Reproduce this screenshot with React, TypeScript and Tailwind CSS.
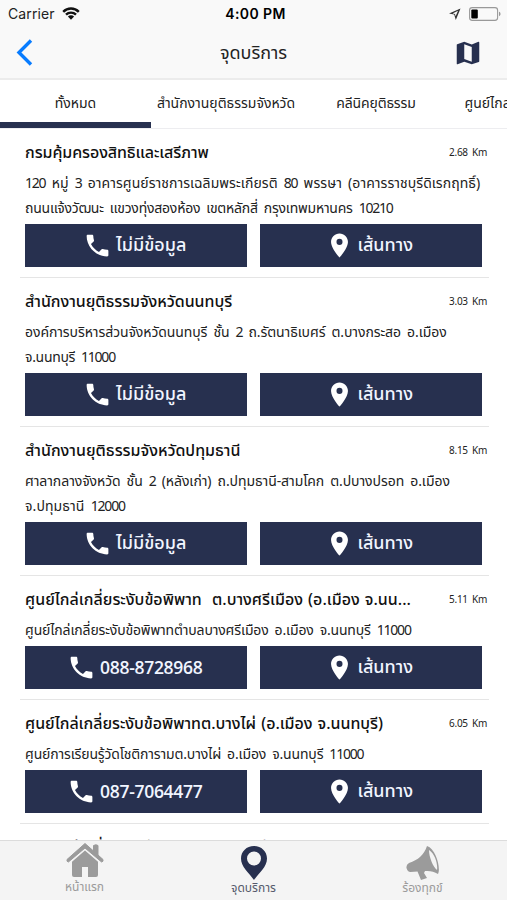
import { useState } from 'react';
import { MdMap, MdPhone, MdPlace } from 'react-icons/md';

const tabs = [
    { label: 'ทั้งหมด', className: 'w-[151px]' },
    { label: 'สำนักงานยุติธรรมจังหวัด', className: 'w-[150px]' },
    { label: 'คลีนิคยุติธรรม', className: 'w-[150px] tracking-[-0.15px]' },
    { label: 'ศูนย์ไกล่เกลี่ย', className: 'w-[102px]' },
];

const places = [
    {
        name: 'กรมคุ้มครองสิทธิและเสรีภาพ',
        nameClass: 'tracking-[-0.08px]',
        lines: [
            { text: '120 หมู่ 3 อาคารศูนย์ราชการเฉลิมพระเกียรติ 80 พรรษา (อาคารราชบุรีดิเรกฤทธิ์)', className: 'tracking-[0.05px]' },
            { text: 'ถนนแจ้งวัฒนะ แขวงทุ่งสองห้อง เขตหลักสี่ กรุงเทพมหานคร 10210', className: 'tracking-[-0.22px]' },
        ],
        distance: '2.68 Km',
        phone: '',
    },
    {
        name: 'สำนักงานยุติธรรมจังหวัดนนทบุรี',
        nameClass: 'tracking-[-0.04px]',
        lines: [
            { text: 'องค์การบริหารส่วนจังหวัดนนทบุรี ชั้น 2 ถ.รัตนาธิเบศร์ ต.บางกระสอ อ.เมือง', className: 'tracking-[-0.08px]' },
            { text: 'จ.นนทบุรี 11000', className: 'tracking-[-0.3px]' },
        ],
        distance: '3.03 Km',
        phone: '',
    },
    {
        name: 'สำนักงานยุติธรรมจังหวัดปทุมธานี',
        nameClass: '',
        lines: [
            { text: 'ศาลากลางจังหวัด ชั้น 2 (หลังเก่า) ถ.ปทุมธานี-สามโคก ต.ปบางปรอท อ.เมือง', className: 'tracking-[-0.07px]' },
            { text: 'จ.ปทุมธานี 12000', className: 'tracking-[0.1px]' },
        ],
        distance: '8.15 Km',
        phone: '',
    },
    {
        name: 'ศูนย์ไกล่เกลี่ยระงับข้อพิพาท \u00a0ต.บางศรีเมือง (อ.เมือง จ.นน...',
        nameClass: '',
        lines: [{ text: 'ศูนย์ไกล่เกลี่ยระงับข้อพิพาทตำบลบางศรีเมือง อ.เมือง จ.นนทบุรี 11000', className: 'tracking-[-0.16px]' }],
        distance: '5.11 Km',
        phone: '088-8728968',
    },
    {
        name: 'ศูนย์ไกล่เกลี่ยระงับข้อพิพาทต.บางไผ่ (อ.เมือง จ.นนทบุรี)',
        nameClass: 'tracking-[-0.04px]',
        lines: [{ text: 'ศูนย์การเรียนรู้วัดโชติการามต.บางไผ่ อ.เมือง จ.นนทบุรี 11000', className: 'tracking-[-0.15px]' }],
        distance: '6.05 Km',
        phone: '087-7064477',
    },
];

// numbers are set tighter than the Thai text around them
function Address({ text, className }: { text: string; className: string }) {
    return (
        <p className={className}>
            {text.split(/(\d+)/).map((part, i) => (i % 2 ? <span key={i} className="tracking-[-1.2px]">{part}</span> : part))}
        </p>
    );
}

export default function App() {
    const [activeTab, setActiveTab] = useState(0);

    return (
        <div className="flex h-[900px] w-[507px] flex-col overflow-hidden bg-white font-['Noto_Sans_Thai','Noto_Sans',sans-serif] text-[#222]">
            {/* Status bar */}
            <div className="grid h-[27px] shrink-0 grid-cols-3 items-center bg-[#f9f9f9] pl-2 pr-1.5 font-['Inter',sans-serif] text-[14px] text-[#222]">
                <div className="flex items-center gap-[7px]">
                    <span className="tracking-[0.1px]">Carrier</span>
                    <svg width="18" height="13" viewBox="0 0 18 13" fill="none" stroke="#111" strokeWidth="2.4">
                        <path d="M1.2 4.8a11 11 0 0 1 15.6 0M4 7.7a7 7 0 0 1 10 0" />
                        <path d="M9 12.7 5.9 9.6a4.4 4.4 0 0 1 6.2 0z" fill="#111" stroke="none" />
                    </svg>
                </div>
                <span className="pl-0.5 text-center font-semibold tracking-[0.4px] text-black">4:00 PM</span>
                <div className="flex items-center justify-end gap-2">
                    <svg width="12" height="12" viewBox="0 0 12 12">
                        <path fillRule="evenodd" fill="#333" d="M11.500.5 0 5.600l5.200 1L6.800 12zM9 2.800 6.600 8.200 6 5.900 3.600 5.400z" />
                    </svg>
                    <svg width="32" height="14" viewBox="0 0 32 14">
                        <rect x=".6" y=".6" width="28" height="12.8" rx="2.6" fill="none" stroke="#999" strokeWidth="1.1" />
                        <rect x="2.3" y="2.5" width="6.5" height="9" rx="1" fill="#000" />
                        <path d="M30 4.8c2 .6 2 3.8 0 4.4z" fill="#999" />
                    </svg>
                </div>
            </div>

            {/* Header */}
            <div className="grid h-[53px] shrink-0 grid-cols-3 items-center border-b-2 border-[#ececec] bg-[#f9f9f9] pl-4 pr-6">
                <svg width="17" height="27" viewBox="0 0 17 27" fill="none" stroke="#087cff" strokeWidth="3.4">
                    <path d="M15 1.5 3 13.5l12 12" />
                </svg>
                <h1 className="pl-2 pt-0.5 text-center text-[18px]">จุดบริการ</h1>
                <MdMap size={30} className="justify-self-end text-[#27304f]" />
            </div>

            {/* Tabs */}
            <div className="flex h-[49px] shrink-0 overflow-hidden border-b border-[#ededf0]">
                {tabs.map((tab, i) => (
                    <button
                        key={tab.label}
                        onClick={() => setActiveTab(i)}
                        className={`shrink-0 whitespace-nowrap border-b-6 pt-[5px] text-[14px] ${tab.className} ${activeTab === i ? 'border-[#27304f]' : 'border-transparent'}`}
                    >
                        {tab.label}
                    </button>
                ))}
            </div>

            {/* Service points */}
            <div className="min-h-0 flex-1 overflow-hidden pl-5 pr-[18px]">
                {places.map((place) => (
                    <div key={place.name} className="border-b border-[#e5e5e5] pb-[10px] pl-[5px] pt-[10px]">
                        <div className="flex h-7 items-center justify-between whitespace-nowrap">
                            <h2 className={`text-[16px] font-medium text-[#111] [word-spacing:1px] ${place.nameClass}`}>{place.name}</h2>
                            <span className="pr-0.5 text-[10px] tracking-[-0.3px] [word-spacing:2px]">{place.distance}</span>
                        </div>
                        <div className="mb-[3px] mt-1 whitespace-nowrap text-[14px] leading-[25px] [word-spacing:2.5px]">
                            {place.lines.map((line) => (
                                <Address key={line.text} {...line} />
                            ))}
                        </div>
                        <div className="flex gap-[13px] pr-[7px] text-[18px] font-medium text-[#f1f5ff]">
                            <button className="flex h-[43px] flex-1 items-center justify-center gap-1 bg-[#27304f] pr-0.5">
                                <MdPhone size={29} className="text-white" />
                                {place.phone ? <span className="font-['Open_Sans',sans-serif] text-[17.5px] font-semibold tracking-[-0.3px]">{place.phone}</span> : 'ไม่มีข้อมูล'}
                            </button>
                            <button className="flex h-[43px] flex-1 items-center justify-center gap-[3px] bg-[#27304f] pr-[3px]">
                                <MdPlace size={29} className="text-white" />
                                เส้นทาง
                            </button>
                        </div>
                    </div>
                ))}
                <div className="flex h-[38px] items-center pl-[5px] pt-[10px]">
                    <h2 className="whitespace-nowrap text-[16px] font-medium text-[#111]">ศูนย์ไกล่เกลี่ยระงับข้อพิพาทต.บางรักน้อย (อ.เมือง จ.นน...</h2>
                </div>
            </div>

            {/* Bottom navigation */}
            <div className="grid h-[60px] shrink-0 grid-cols-3 border-t border-[#dcdcdc] bg-[#f4f4f4] text-[12px] text-[#9b9b9b]">
                <button className="flex flex-col items-center pt-px">
                    <svg width="38" height="36" viewBox="0 0 38 36" fill="#9b9b9b">
                        <path d="M19 1.5 1 17.500q-.7 2 1.400 2.500L19 6l16.600 14q2.100-.5 1.400-2.500L32 13V3.500q-2-1.500-4.500 0V9z" stroke="#9b9b9b" strokeWidth="1" strokeLinejoin="round" />
                        <path d="M19 8.500 6 19.800V33q0 2 2 2h8V25h6v10h8q2 0 2-2V19.800z" />
                    </svg>
                    <span className="pt-px leading-4">หน้าแรก</span>
                </button>
                <button className="flex flex-col items-center pt-[5px] text-[#555a6c]">
                    <svg width="26" height="34" viewBox="0 0 26 34" fill="#27304f">
                        <path fillRule="evenodd" d="M13 0C5.500 0 0 5.500 0 12.500 0 21 7.500 26 13 34c5.500-8 13-13 13-21.500C26 5.500 20.500 0 13 0m0 5.500a7 7 0 1 1 0 14 7 7 0 0 1 0-14" />
                    </svg>
                    <span className="leading-4">จุดบริการ</span>
                </button>
                <button className="flex flex-col items-center pt-[5px]">
                    <svg width="34" height="34" viewBox="0 0 34 34" fill="#9b9b9b">
                        <path fillRule="evenodd" d="M21 0c-3 9-9 14-18 17q-3 1.500-2.500 5 1 4 4 4l7-.5 3.500 8.500 6-2-3-5 1-2c5-.5 9 .5 13 3 3-6-2-25-11-28m2 4c6 4 9 14 8 20-4-3-8-13-8-20" />
                    </svg>
                    <span className="leading-4">ร้องทุกข์</span>
                </button>
            </div>
        </div>
    );
}
